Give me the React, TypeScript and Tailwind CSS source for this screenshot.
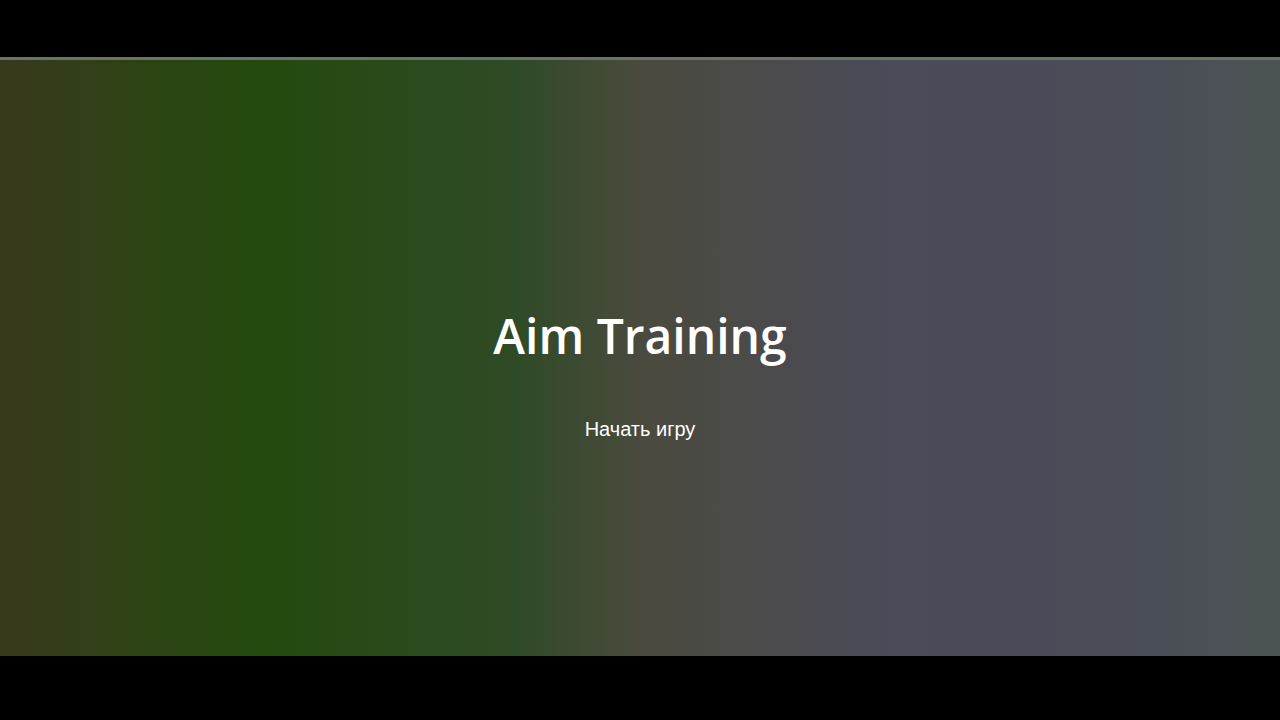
export default function App() {
  return (
    <div className="w-full h-[720px] bg-black flex flex-col">
      <div className="h-[57px] shrink-0" />
      <main className="h-[599px] shrink-0 border-t-[3px] border-[#6a7466] flex flex-col items-center pt-[252px] bg-[linear-gradient(to_right,#38391c_0%,#244a0e_20%,#2f4a26_40%,#4a4a3e_50%,#4b4b5a_70%,#4a4c58_85%,#4b5354_100%)]">
        <h1 className="text-[48px] leading-none font-semibold text-white font-['Open_Sans',sans-serif]">
          Aim Training
        </h1>
        <button className="mt-[58px] text-[20px] leading-[23px] text-white font-['Liberation_Sans',Arial,sans-serif]">
          Начать игру
        </button>
      </main>
    </div>
  );
}
